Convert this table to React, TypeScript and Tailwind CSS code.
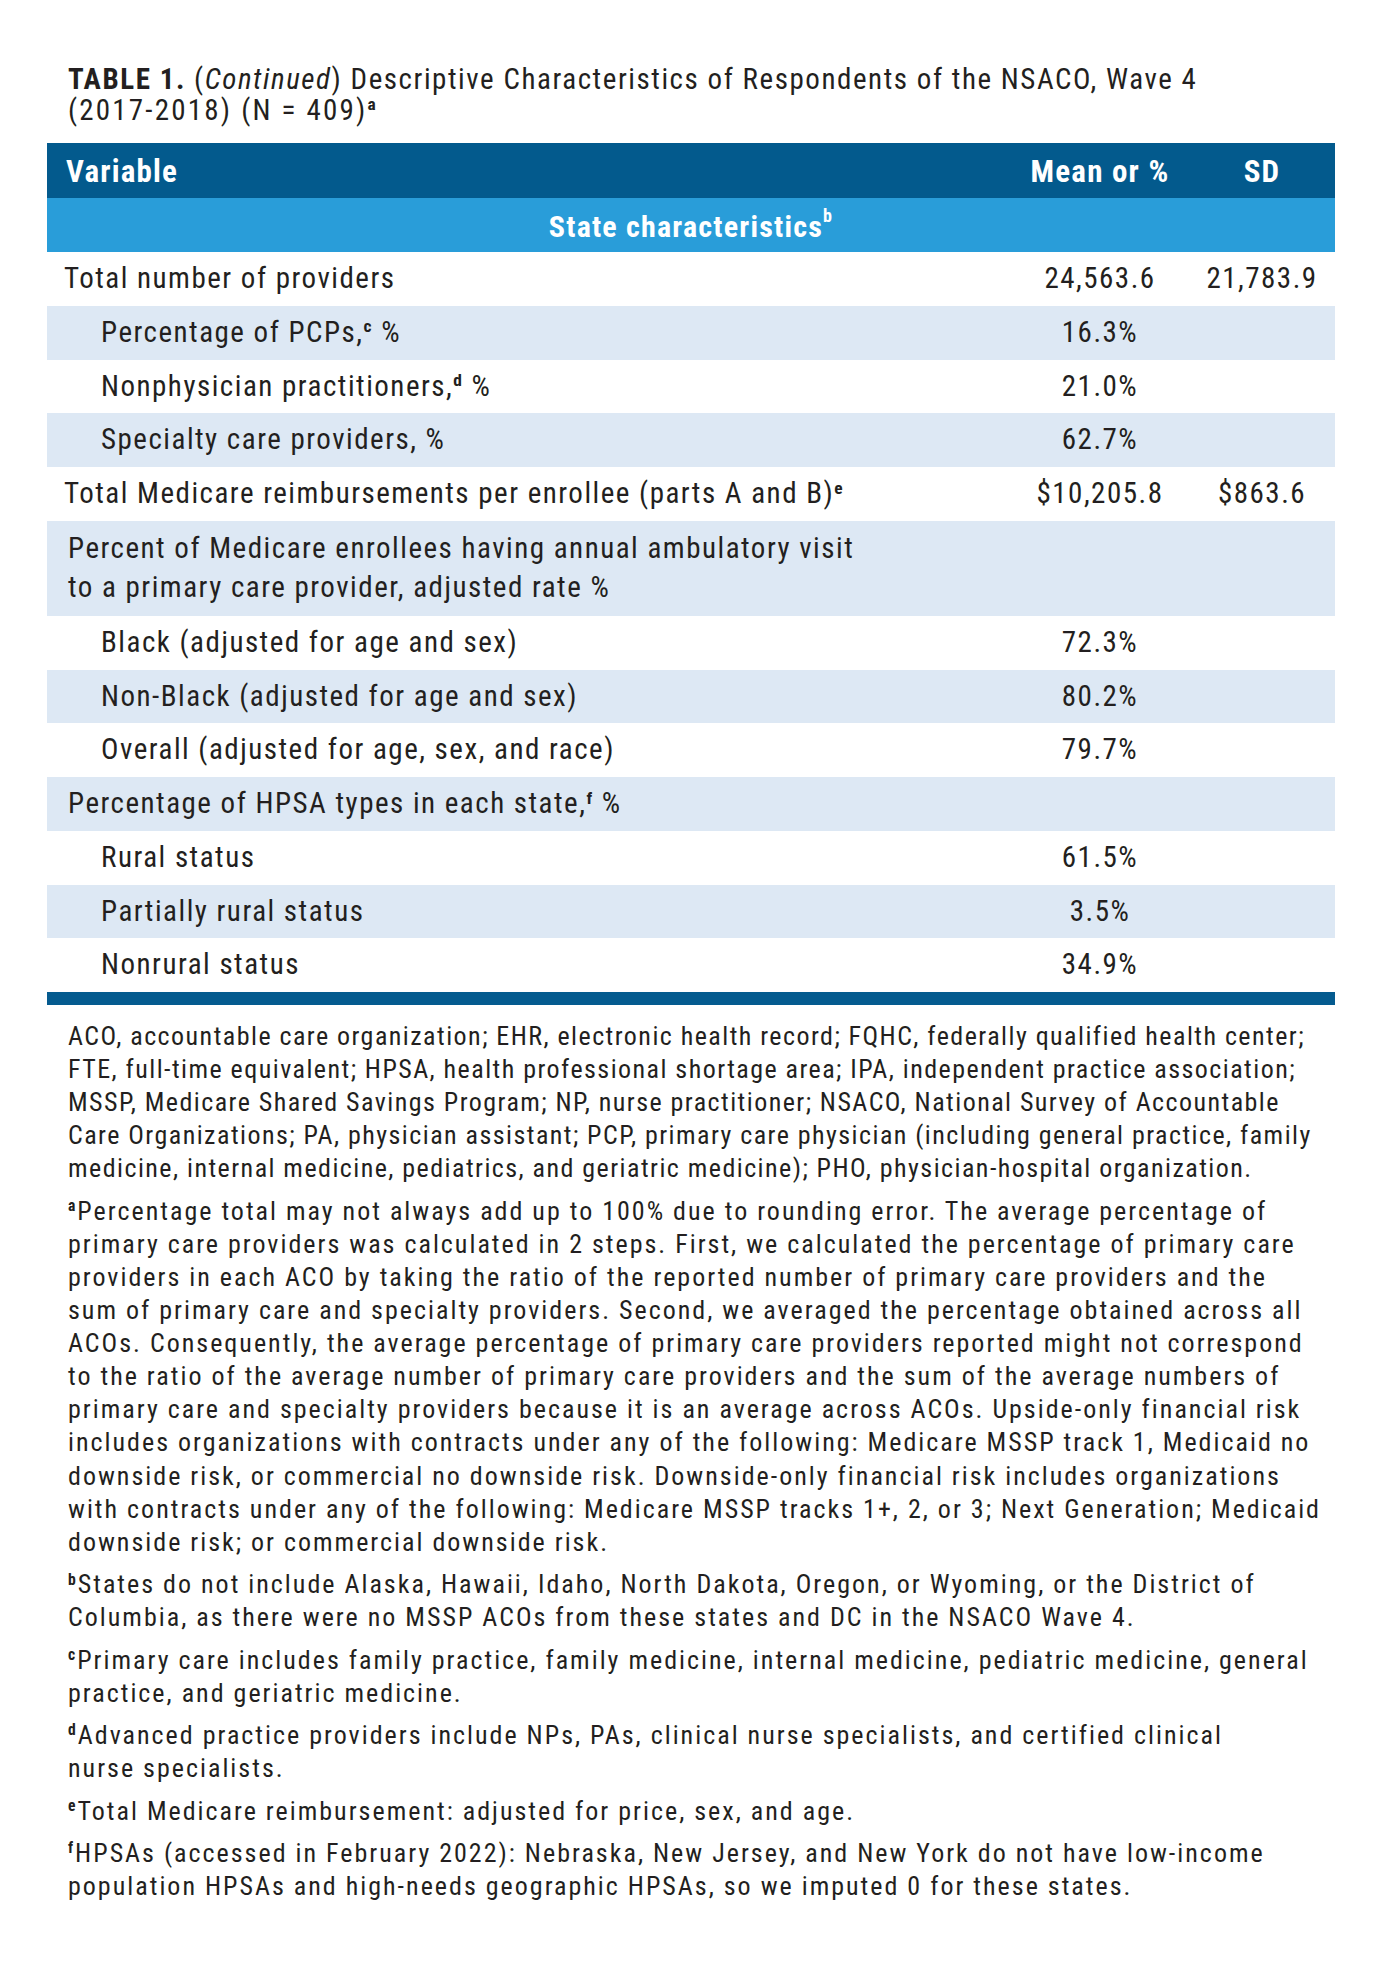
import type { ReactNode } from "react";

function Sup({ children }: { children: ReactNode }) {
	return <sup className="relative top-[-0.55em] text-[0.6em] font-bold align-baseline">{children}</sup>;
}

type Row = {
	label: ReactNode;
	mean?: string;
	sd?: string;
	indent?: boolean;
	shade?: boolean;
	tall?: boolean;
	pad?: string;
};

const rows: Row[] = [
	{ label: "Total number of providers", mean: "24,563.6", sd: "21,783.9", pad: "pl-[17px]" },
	{ label: <>Percentage of PCPs,<Sup>c</Sup> %</>, mean: "16.3%", indent: true, shade: true },
	{ label: <>Nonphysician practitioners,<Sup>d</Sup> %</>, mean: "21.0%", indent: true },
	{ label: "Specialty care providers, %", mean: "62.7%", indent: true, shade: true },
	{ label: <>Total Medicare reimbursements per enrollee (parts A and B)<Sup>e</Sup></>, mean: "$10,205.8", sd: "$863.6", pad: "pl-[17px]" },
	{
		label: (
			<>
				Percent of Medicare enrollees having annual ambulatory visit
				<br />
				to a primary care provider, adjusted rate %
			</>
		),
		shade: true,
		tall: true,
		pad: "pl-[21px]",
	},
	{ label: "Black (adjusted for age and sex)", mean: "72.3%", indent: true },
	{ label: "Non-Black (adjusted for age and sex)", mean: "80.2%", indent: true, shade: true },
	{ label: "Overall (adjusted for age, sex, and race)", mean: "79.7%", indent: true },
	{ label: <>Percentage of HPSA types in each state,<Sup>f</Sup> %</>, shade: true, pad: "pl-[21px]" },
	{ label: "Rural status", mean: "61.5%", indent: true },
	{ label: "Partially rural status", mean: "3.5%", indent: true, shade: true },
	{ label: "Nonrural status", mean: "34.9%", indent: true },
];

const notes: { mark?: string; tight?: boolean; lines: string[] }[] = [
	{
		tight: true,
		lines: [
			"ACO, accountable care organization; EHR, electronic health record; FQHC, federally qualified health center;",
			"FTE, full-time equivalent; HPSA, health professional shortage area; IPA, independent practice association;",
			"MSSP, Medicare Shared Savings Program; NP, nurse practitioner; NSACO, National Survey of Accountable",
			"Care Organizations; PA, physician assistant; PCP, primary care physician (including general practice, family",
			"medicine, internal medicine, pediatrics, and geriatric medicine); PHO, physician-hospital organization.",
		],
	},
	{
		mark: "a",
		lines: [
			"Percentage total may not always add up to 100% due to rounding error. The average percentage of",
			"primary care providers was calculated in 2 steps. First, we calculated the percentage of primary care",
			"providers in each ACO by taking the ratio of the reported number of primary care providers and the",
			"sum of primary care and specialty providers. Second, we averaged the percentage obtained across all",
			"ACOs. Consequently, the average percentage of primary care providers reported might not correspond",
			"to the ratio of the average number of primary care providers and the sum of the average numbers of",
			"primary care and specialty providers because it is an average across ACOs. Upside-only financial risk",
			"includes organizations with contracts under any of the following: Medicare MSSP track 1, Medicaid no",
			"downside risk, or commercial no downside risk. Downside-only financial risk includes organizations",
			"with contracts under any of the following: Medicare MSSP tracks 1+, 2, or 3; Next Generation; Medicaid",
			"downside risk; or commercial downside risk.",
		],
	},
	{
		mark: "b",
		lines: [
			"States do not include Alaska, Hawaii, Idaho, North Dakota, Oregon, or Wyoming, or the District of",
			"Columbia, as there were no MSSP ACOs from these states and DC in the NSACO Wave 4.",
		],
	},
	{
		mark: "c",
		lines: [
			"Primary care includes family practice, family medicine, internal medicine, pediatric medicine, general",
			"practice, and geriatric medicine.",
		],
	},
	{
		mark: "d",
		lines: [
			"Advanced practice providers include NPs, PAs, clinical nurse specialists, and certified clinical",
			"nurse specialists.",
		],
	},
	{ mark: "e", lines: ["Total Medicare reimbursement: adjusted for price, sex, and age."] },
	{
		mark: "f",
		lines: [
			"HPSAs (accessed in February 2022): Nebraska, New Jersey, and New York do not have low-income",
			"population HPSAs and high-needs geographic HPSAs, so we imputed 0 for these states.",
		],
	},
];

export default function App() {
	return (
		<div className="min-h-[1962px] bg-white pl-[47px] pr-[50px] pt-[64px] font-['Roboto_Condensed',sans-serif] text-[#231f20]">
			<h1 className="pl-[21px] text-[29px] leading-[31px] tracking-[1.55px]">
				<span className="font-bold">TABLE 1.</span> (<span className="italic">Continued</span>) Descriptive Characteristics of Respondents of the NSACO, Wave 4
				<br />
				<span className="tracking-[2.2px]">(2017-2018) (N = 409)</span>
				<Sup>a</Sup>
			</h1>

			<div className="mt-[17px]">
				<div className="flex h-[55px] items-center bg-[#035a8d] pt-[3px] text-[31px] font-bold tracking-[1.2px] text-white">
					<div className="flex-1 pl-[19px]">Variable</div>
					<div className="w-[178px] text-center">Mean or %</div>
					<div className="w-[146px] text-center">SD</div>
				</div>
				<div className="flex h-[54px] items-center justify-center bg-[#299dd9] pt-[2px] text-[30px] font-bold tracking-[1.2px] text-white">
					State characteristics<Sup>b</Sup>
				</div>

				{rows.map((r, i) => (
					<div
						key={i}
						className={`flex items-center text-[29px] tracking-[1.5px] ${r.tall ? "h-[95px] leading-[39px]" : "h-[53.75px]"} ${r.shade ? "bg-[#dde8f4]" : "bg-white"}`}
					>
						<div className={`flex-1 ${r.indent ? "pl-[54px]" : r.pad}`}>{r.label}</div>
						<div className="w-[178px] text-center">{r.mean}</div>
						<div className="w-[146px] text-center">{r.sd}</div>
					</div>
				))}

				<div className="h-[13px] bg-[#055b8f]" />
			</div>

			<div className="flex flex-col gap-[9.3px] pt-[15px] pl-[21px] text-[26px] leading-[33.1px]">
				{notes.map((n, i) => (
					<p key={i} className={n.tight ? "tracking-[1.45px]" : "tracking-[2px]"}>
						{n.lines.map((l, j) => (
							<span key={j} className="block whitespace-nowrap">
								{j === 0 && n.mark ? <Sup>{n.mark}</Sup> : null}
								{l}
							</span>
						))}
					</p>
				))}
			</div>
		</div>
	);
}
